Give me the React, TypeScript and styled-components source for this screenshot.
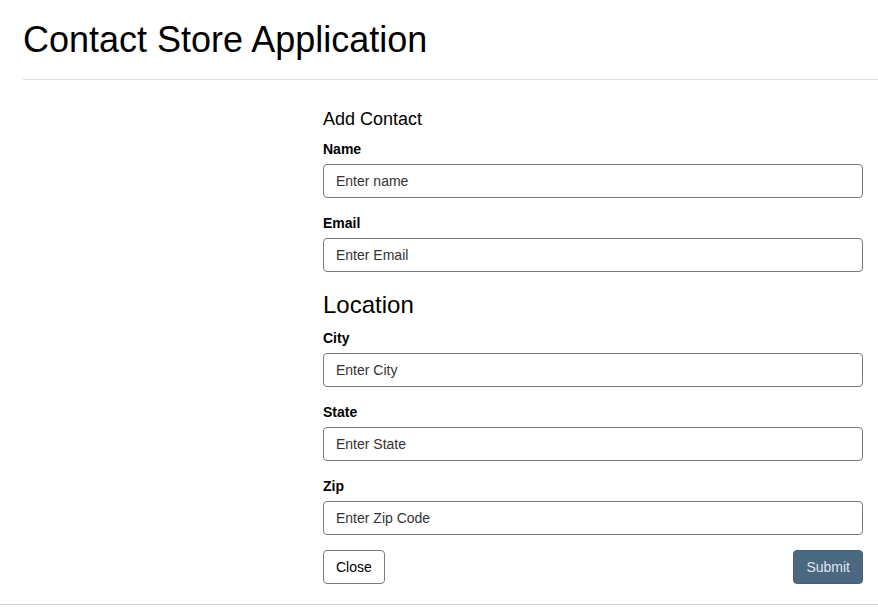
import React from "react";
import styled, { createGlobalStyle } from "styled-components";

const GlobalStyle = createGlobalStyle`
  body {
    margin: 0;
    background: #fff;
    font-family: "Liberation Sans", Arial, sans-serif;
    color: #000;
  }
  * { box-sizing: border-box; }
`;

const fields = [
  { label: "Name", placeholder: "Enter name" },
  { label: "Email", placeholder: "Enter Email" },
];

const location = [
  { label: "City", placeholder: "Enter City" },
  { label: "State", placeholder: "Enter State" },
  { label: "Zip", placeholder: "Enter Zip Code" },
];

const App = () => {
  return (
    <>
      <GlobalStyle />
      <Header>
        <Title>Contact Store Application</Title>
      </Header>
      <Divider />
      <Main>
        <Form onSubmit={(e) => e.preventDefault()}>
          <SubTitle>Add Contact</SubTitle>
          {fields.map((f) => (
            <FormGroup key={f.label}>
              <Label>{f.label}</Label>
              <Input placeholder={f.placeholder} />
            </FormGroup>
          ))}
          <SectionTitle>Location</SectionTitle>
          {location.map((f) => (
            <FormGroup key={f.label}>
              <Label>{f.label}</Label>
              <Input placeholder={f.placeholder} />
            </FormGroup>
          ))}
          <Actions>
            <Button type="button">Close</Button>
            <Button type="submit" primary>
              Submit
            </Button>
          </Actions>
        </Form>
      </Main>
      <Footer />
    </>
  );
};

const Header = styled.header`
  padding: 20px 0 0 23px;
`;

const Title = styled.h1`
  margin: 0;
  font-size: 36px;
  font-weight: 400;
  line-height: 40px;
`;

const Divider = styled.hr`
  margin: 19px 0 0 23px;
  border: 0;
  border-top: 1px solid #dddddd;
`;

const Main = styled.main`
  display: flex;
  padding: 29px 15px 0 323px;
`;

const Form = styled.form`
  width: 540px;
  display: flex;
  flex-direction: column;
`;

const SubTitle = styled.h3`
  margin: 0 0 10px;
  font-size: 18px;
  font-weight: 400;
  line-height: 20px;
`;

const SectionTitle = styled.h2`
  margin: 4px 0 9px;
  font-size: 24px;
  font-weight: 400;
  line-height: 28px;
`;

const FormGroup = styled.div`
  display: flex;
  flex-direction: column;
  margin-bottom: 15px;
`;

const Label = styled.label`
  font-size: 14px;
  font-weight: 700;
  line-height: 20px;
  margin-bottom: 5px;
`;

const Input = styled.input`
  height: 34px;
  padding: 6px 12px;
  font-family: inherit;
  font-size: 14px;
  color: #222;
  border: 1px solid #7a7a7a;
  border-radius: 4px;
  outline: none;
  &::placeholder {
    color: #333;
  }
`;

const Actions = styled.div`
  display: flex;
  justify-content: space-between;
`;

const Button = styled.button<{ primary?: boolean }>`
  height: 34px;
  padding: 6px 12px;
  font-family: inherit;
  font-size: 14px;
  line-height: 20px;
  border-radius: 4px;
  cursor: pointer;
  color: ${(p) => (p.primary ? "#dfe5ea" : "#000")};
  background: ${(p) => (p.primary ? "#4b6881" : "#fff")};
  border: 1px solid ${(p) => (p.primary ? "#445f77" : "#7a7a7a")};
`;

const Footer = styled.footer`
  margin-top: 20px;
  border-top: 1px solid #d4d4d4;
`;

export default App;
